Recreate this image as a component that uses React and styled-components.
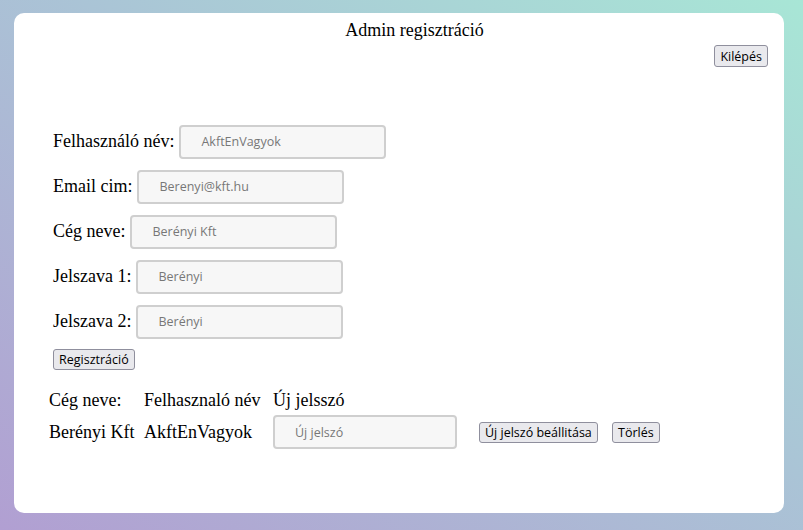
import React from "react";
import styled, { createGlobalStyle } from "styled-components";

const GlobalStyle = createGlobalStyle`
    html, body {
        margin: 0;
        height: 100%;
    }
    body {
        background: linear-gradient(to top right, #b19fd2, #aac4d6 55%, #a8e6d6);
        font-family: "Liberation Serif", "Times New Roman", serif;
        color: #000;
    }
    #root {
        height: 100%;
        box-sizing: border-box;
        padding: 13px 19px 17px 14px;
    }
`;

const Card = styled.div`
    height: 100%;
    box-sizing: border-box;
    background: #fff;
    border-radius: 10px;
    padding: 7px 16px 0 35px;
`;

const Title = styled.div`
    font-size: 18px;
    line-height: 21px;
    text-align: center;
    padding-left: 12px;
`;

const TopBar = styled.div`
    display: flex;
    justify-content: flex-end;
    margin-top: 4px;
`;

const Button = styled.button`
    font-family: "Open Sans", "Noto Sans", sans-serif;
    font-size: 12.5px;
    height: ${p => p.$h || 22}px;
    padding: 0 5px;
    background: #e9e9ed;
    border: 1px solid #8f8f9d;
    border-radius: 3px;
    color: #000;
`;

const Form = styled.div`
    display: flex;
    flex-direction: column;
    margin-top: 52px;
    padding-left: 4px;
`;

const Row = styled.div`
    display: flex;
    align-items: center;
    gap: 5px;
    height: 45px;
`;

const Label = styled.label`
    font-size: 18px;
`;

const Input = styled.input`
    box-sizing: border-box;
    width: ${p => p.$w || 207}px;
    height: 34px;
    padding: 0 20px;
    border: 2px solid #cfcfcf;
    border-radius: 4px;
    background: #f7f7f7;
    font-family: "Open Sans", "Noto Sans", sans-serif;
    font-size: 12.5px;
    &::placeholder {
        color: #777;
    }
`;

const SubmitWrap = styled.div`
    margin-top: 5px;
`;

const Table = styled.div`
    display: grid;
    grid-template-columns: 95px 129px 206px 133px auto;
    grid-template-rows: 24px 34px;
    row-gap: 3px;
    align-items: center;
    margin-top: 18px;
    font-size: 18px;
`;

const Cell = styled.div`
    white-space: nowrap;
`;

export default function App() {
    const fields = [
        { label: "Felhasználó név:", ph: "AkftEnVagyok" },
        { label: "Email cim:", ph: "Berenyi@kft.hu" },
        { label: "Cég neve:", ph: "Berényi Kft" },
        { label: "Jelszava 1:", ph: "Berényi" },
        { label: "Jelszava 2:", ph: "Berényi" },
    ];

    return (
        <>
            <GlobalStyle />
            <Card>
                <Title>Admin regisztráció</Title>
                <TopBar>
                    <Button>Kilépés</Button>
                </TopBar>
                <Form>
                    {fields.map(f => (
                        <Row key={f.label}>
                            <Label>{f.label}</Label>
                            <Input placeholder={f.ph} />
                        </Row>
                    ))}
                    <SubmitWrap>
                        <Button $h={21}>Regisztráció</Button>
                    </SubmitWrap>
                </Form>
                <Table>
                    <Cell>Cég neve:</Cell>
                    <Cell>Felhasznaló név</Cell>
                    <Cell>Új jelsszó</Cell>
                    <Cell />
                    <Cell />
                    <Cell>Berényi Kft</Cell>
                    <Cell>AkftEnVagyok</Cell>
                    <Cell><Input $w={184} placeholder="Új jelszó" /></Cell>
                    <Cell><Button $h={21}>Új jelszó beállitása</Button></Cell>
                    <Cell><Button $h={21}>Törlés</Button></Cell>
                </Table>
            </Card>
        </>
    );
}
